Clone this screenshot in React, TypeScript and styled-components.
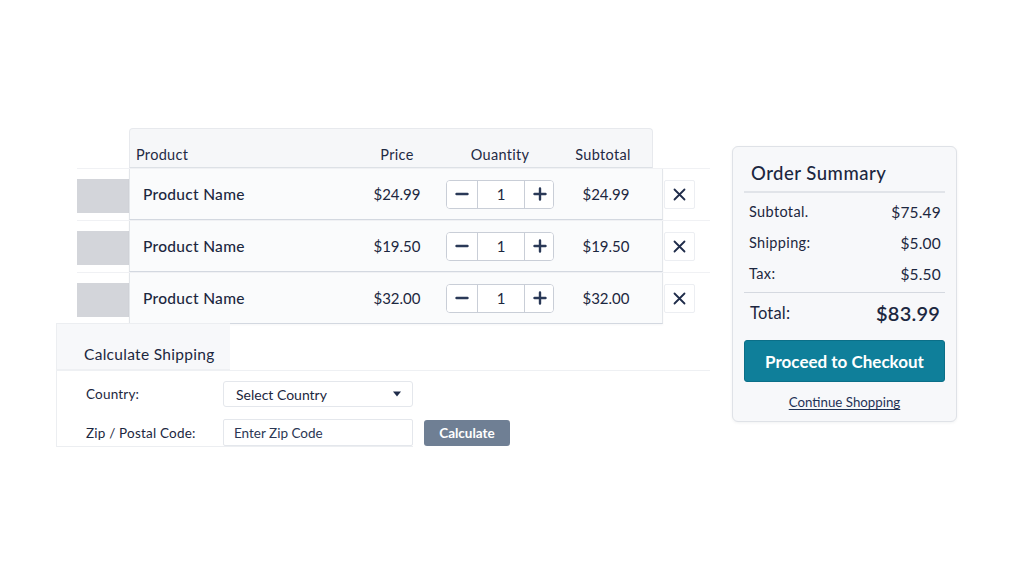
import React from "react";
import styled, { createGlobalStyle } from "styled-components";

const GlobalStyle = createGlobalStyle`
	html, body {
		margin: 0;
		padding: 0;
		background: #ffffff;
	}
	body {
		font-family: Lato, "Noto Sans", "Liberation Sans", sans-serif;
		color: #1c2740;
	}
	* {
		box-sizing: border-box;
	}
`;

const Page = styled.div`
	width: 1024px;
	height: 582px;
	display: flex;
	align-items: flex-start;
	padding-top: 128px;
`;

const CartColumn = styled.div`
	display: flex;
	flex-direction: column;
	margin-left: 56px;
	width: 656px;
`;

// shared column layout for the header and the item rows
const columns = `
	display: grid;
	grid-template-columns: 205px 80px 108px 86px;
	column-gap: 9px;
	align-items: center;
	padding-left: 13px;
`;

const TableHead = styled.div`
	${columns}
	margin-left: 73px;
	width: 524px;
	height: 40px;
	padding-top: 12px;
	background: #f6f7f9;
	border: 1px solid #e7e9ed;
	border-bottom: 1px solid #dde1e6;
	border-radius: 4px 4px 0 0;
	font-size: 14.5px;
	letter-spacing: 0.3px;
	color: #1f2a44;
`;

type CellAlign = "left" | "center" | "end";

const HeadCell = styled.div<{ $align?: CellAlign }>`
	text-align: ${({ $align }) => ($align === "left" ? "left" : "center")};
	margin-left: ${({ $align }) => ($align === "left" ? "-7px" : "0")};
	margin-right: ${({ $align }) => ($align === "end" ? "6px" : "0")};
`;

const ItemRow = styled.div`
	display: flex;
	align-items: center;
	margin-left: 21px;
	width: 633px;
	border-top: 1px solid #f0f1f4;
`;

const Thumb = styled.div`
	width: 52px;
	height: 34px;
	margin-top: 2px;
	background: #d3d5da;
	flex-shrink: 0;
`;

const ItemCells = styled.div`
	${columns}
	width: 534px;
	height: 51px;
	background: #fafbfc;
	border-left: 1px solid #e3e6ea;
	border-right: 1px solid #e3e6ea;
	border-bottom: 1px solid #d3d8e0;
	box-shadow: 0 1px 2px rgba(20, 30, 50, 0.04);
	flex-shrink: 0;
`;

const ItemName = styled.div`
	font-size: 15.5px;
	font-weight: 500;
	letter-spacing: 0.3px;
	color: #1c2740;
`;

const Money = styled.div`
	text-align: center;
	font-size: 15px;
	color: #1c2740;
`;

const Stepper = styled.div`
	display: grid;
	grid-template-columns: 31px 46px 31px;
	height: 29px;
	background: #ffffff;
	border: 1px solid #c9ced7;
	border-radius: 4px;
	overflow: hidden;
`;

const StepButton = styled.button`
	display: flex;
	align-items: center;
	justify-content: center;
	padding: 0;
	border: none;
	background: #ffffff;
	color: #2a3957;
	cursor: pointer;
	&:first-child {
		border-right: 1px solid #c9ced7;
	}
	&:last-child {
		border-left: 1px solid #c9ced7;
	}
`;

const StepValue = styled.div`
	display: flex;
	align-items: center;
	justify-content: center;
	font-size: 15px;
	color: #1c2740;
`;

const RemoveButton = styled.button`
	display: flex;
	align-items: center;
	justify-content: center;
	width: 31px;
	height: 29px;
	margin-left: 1px;
	padding: 0;
	background: #ffffff;
	border: 1px solid #eceef2;
	border-radius: 2px;
	color: #1f2c4a;
	cursor: pointer;
`;

const ShippingSection = styled.div`
	display: flex;
	flex-direction: column;
	margin-top: -1px;
	width: 654px;
`;

const ShippingTab = styled.div`
	width: 174px;
	height: 47px;
	padding: 21px 0 0 27px;
	background: #f7f8fa;
	border-top: 1px solid #eceef1;
	border-left: 1px solid #eceef1;
	border-bottom: 1px solid #eef0f3;
	font-size: 15.5px;
	letter-spacing: 0.3px;
	color: #1c2740;
`;

const Divider = styled.div`
	height: 1px;
	background: #eef0f3;
`;

const ShippingForm = styled.div`
	display: grid;
	grid-template-columns: 155px 190px 86px;
	column-gap: 11px;
	row-gap: 12px;
	align-items: center;
	width: 357px;
	padding-top: 10px;
	border-left: 1px solid #eceef1;
	border-bottom: 1px solid #eceef1;
`;

const FieldLabel = styled.label`
	padding-left: 29px;
	font-size: 13.5px;
	letter-spacing: 0.2px;
	color: #1c2740;
`;

const SelectBox = styled.div`
	display: flex;
	align-items: center;
	justify-content: space-between;
	height: 26px;
	padding: 0 10px 0 12px;
	background: #ffffff;
	border: 1px solid #e4e7ec;
	border-radius: 3px;
	font-size: 14px;
	color: #1c2740;
`;

const TextInput = styled.input`
	height: 27px;
	width: 190px;
	padding: 0 10px;
	background: #ffffff;
	border: 1px solid #e4e7ec;
	border-radius: 2px;
	font-family: inherit;
	font-size: 13.5px;
	color: #1c2740;
	&::placeholder {
		color: #2b3754;
	}
`;

const CalcButton = styled.button`
	height: 26px;
	width: 86px;
	background: #6f7f94;
	border: none;
	border-radius: 3px;
	font-family: inherit;
	font-size: 13.5px;
	font-weight: 700;
	color: #ffffff;
	cursor: pointer;
`;

const SummaryCard = styled.aside`
	display: flex;
	flex-direction: column;
	margin-top: 18px;
	margin-left: 20px;
	width: 225px;
	height: 276px;
	padding: 15px 11px 0 11px;
	background: #f7f8fa;
	border: 1px solid #dfe2e7;
	border-radius: 6px;
	box-shadow: 0 1px 3px rgba(20, 30, 50, 0.06);
`;

const SummaryTitle = styled.h2`
	margin: 0;
	padding: 0 0 7px 7px;
	font-size: 18.5px;
	line-height: 22px;
	font-weight: 500;
	letter-spacing: 0.5px;
	color: #1c2740;
	border-bottom: 2px solid #e1e4e9;
`;

const SummaryLines = styled.div`
	display: flex;
	flex-direction: column;
	gap: 12px;
	padding: 9px 4px 9px 5px;
	border-bottom: 1px solid #d5d9e0;
`;

const SummaryLine = styled.div`
	display: flex;
	justify-content: space-between;
	align-items: center;
	height: 19px;
	font-size: 14.5px;
	letter-spacing: 0.35px;
	color: #1c2740;
	& > span:last-child {
		font-size: 15.5px;
		letter-spacing: 0.2px;
	}
`;

const TotalLine = styled.div`
	display: flex;
	justify-content: space-between;
	align-items: center;
	height: 24px;
	margin-top: 8px;
	padding: 0 5px 0 6px;
	font-size: 16.5px;
	letter-spacing: 0.2px;
	color: #1c2740;
	& > span:last-child {
		font-size: 20px;
		font-weight: 600;
	}
`;

const CheckoutButton = styled.button`
	margin-top: 15px;
	height: 42px;
	width: 100%;
	flex-shrink: 0;
	background: #0f7f9a;
	border: 1px solid #0b6f88;
	border-radius: 3px;
	font-family: inherit;
	font-size: 17px;
	font-weight: 700;
	color: #ffffff;
	cursor: pointer;
`;

const ContinueLink = styled.a`
	margin-top: 12px;
	line-height: 16px;
	text-align: center;
	font-size: 13.3px;
	color: #1f3256;
	text-decoration: underline;
	text-underline-offset: 2px;
	cursor: pointer;
`;

const items = [
	{ name: "Product Name", price: "$24.99", qty: 1 },
	{ name: "Product Name", price: "$19.50", qty: 1 },
	{ name: "Product Name", price: "$32.00", qty: 1 },
];

const MinusIcon = () => (
	<svg width="14" height="14" viewBox="0 0 14 14">
		<path d="M1.5 7h11" stroke="currentColor" strokeWidth="2.4" strokeLinecap="round" />
	</svg>
);

const PlusIcon = () => (
	<svg width="14" height="14" viewBox="0 0 14 14">
		<path d="M1.5 7h11M7 1.5v11" stroke="currentColor" strokeWidth="2.4" strokeLinecap="round" />
	</svg>
);

const CloseIcon = () => (
	<svg width="13" height="13" viewBox="0 0 13 13">
		<path d="M1.5 1.5l10 10M11.5 1.5l-10 10" stroke="currentColor" strokeWidth="1.8" strokeLinecap="round" />
	</svg>
);

const Caret = () => (
	<svg width="10" height="6" viewBox="0 0 10 6">
		<path d="M1 0.5h8L5 5.5z" fill="#1f2c4a" />
	</svg>
);

export default function App() {
	return (
		<>
			<GlobalStyle />
			<Page>
				<CartColumn>
					<TableHead>
						<HeadCell $align="left">Product</HeadCell>
						<HeadCell>Price</HeadCell>
						<HeadCell>Ouantity</HeadCell>
						<HeadCell $align="end">Subtotal</HeadCell>
					</TableHead>
					{items.map((item, index) => (
						<ItemRow key={index}>
							<Thumb />
							<ItemCells>
								<ItemName>{item.name}</ItemName>
								<Money>{item.price}</Money>
								<Stepper>
									<StepButton aria-label="Decrease">
										<MinusIcon />
									</StepButton>
									<StepValue>{item.qty}</StepValue>
									<StepButton aria-label="Increase">
										<PlusIcon />
									</StepButton>
								</Stepper>
								<Money>{item.price}</Money>
							</ItemCells>
							<RemoveButton aria-label="Remove">
								<CloseIcon />
							</RemoveButton>
						</ItemRow>
					))}

					<ShippingSection>
						<ShippingTab>Calculate Shipping</ShippingTab>
						<Divider />
						<ShippingForm>
							<FieldLabel>Country:</FieldLabel>
							<SelectBox>
								<span>Select Country</span>
								<Caret />
							</SelectBox>
							<span />
							<FieldLabel>Zip / Postal Code:</FieldLabel>
							<TextInput placeholder="Enter Zip Code" />
							<CalcButton>Calculate</CalcButton>
						</ShippingForm>
					</ShippingSection>
				</CartColumn>

				<SummaryCard>
					<SummaryTitle>Order Summary</SummaryTitle>
					<SummaryLines>
						<SummaryLine>
							<span>Subtotal.</span>
							<span>$75.49</span>
						</SummaryLine>
						<SummaryLine>
							<span>Shipping:</span>
							<span>$5.00</span>
						</SummaryLine>
						<SummaryLine>
							<span>Tax:</span>
							<span>$5.50</span>
						</SummaryLine>
					</SummaryLines>
					<TotalLine>
						<span>Total:</span>
						<span>$83.99</span>
					</TotalLine>
					<CheckoutButton>Proceed to Checkout</CheckoutButton>
					<ContinueLink>Continue Shopping</ContinueLink>
				</SummaryCard>
			</Page>
		</>
	);
}
